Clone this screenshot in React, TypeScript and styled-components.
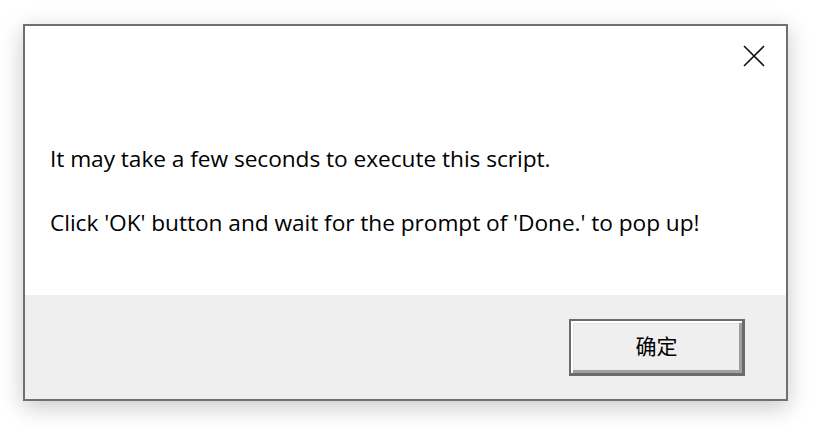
import React from 'react';
import styled, { createGlobalStyle } from 'styled-components';

const GlobalStyle = createGlobalStyle`
  html, body {
    margin: 0;
    padding: 0;
    background: #ffffff;
  }
  body {
    width: 822px;
    height: 439px;
    overflow: hidden;
    font-family: 'Open Sans', 'Noto Sans', 'Noto Sans CJK SC', sans-serif;
  }
`;

const Dialog = styled.div`
  margin: 24px 0 0 23px;
  width: 765px;
  height: 377px;
  box-sizing: border-box;
  border: 2px solid #707070;
  background: #ffffff;
  display: flex;
  flex-direction: column;
  box-shadow: 0 6px 22px rgba(0, 0, 0, 0.22);
`;

const Content = styled.div`
  flex: 1;
  display: flex;
  flex-direction: column;
  padding: 19px 21px 0 25px;
`;

const TitleRow = styled.div`
  display: flex;
  justify-content: flex-end;
  height: 20px;
`;

const CloseButton = styled.button`
  width: 22px;
  height: 22px;
  padding: 0;
  border: none;
  background: transparent;
  display: flex;
  align-items: center;
  justify-content: center;
  cursor: pointer;
`;

const Message = styled.p<{ $gap: number }>`
  margin: ${p => p.$gap}px 0 0;
  font-size: 22.7px;
  letter-spacing: -0.05px;
  line-height: 32px;
  color: #000000;
  white-space: nowrap;
`;

const Footer = styled.div`
  height: 104px;
  background: #efefef;
  display: flex;
  justify-content: flex-end;
  align-items: flex-start;
  padding: 24px 41px 0 0;
  box-sizing: border-box;
`;

const OkButton = styled.button`
  width: 176px;
  height: 57px;
  box-sizing: border-box;
  border: 2px solid #6b6b6b;
  border-right-width: 3px;
  border-bottom-width: 3px;
  background: #efefef;
  box-shadow:
    inset 2px 2px 0 #ffffff,
    inset -3px -3px 0 #a0a0a0,
    inset 3px 3px 0 #e3e3e3;
  font-family: 'Noto Sans CJK SC', 'Noto Sans', sans-serif;
  font-size: 21px;
  color: #000000;
  padding: 0 0 4px;
  display: flex;
  align-items: center;
  justify-content: center;
`;

export default function App() {
  return (
    <>
      <GlobalStyle />
      <Dialog>
        <Content>
          <TitleRow>
            <CloseButton type="button" aria-label="Close">
              <svg width="22" height="22" viewBox="0 0 22 22">
                <path d="M1 1 L21 21 M21 1 L1 21" stroke="#111" strokeWidth="1.6" fill="none" />
              </svg>
            </CloseButton>
          </TitleRow>
          <Message $gap={78}>It may take a few seconds to execute this script.</Message>
          <Message $gap={32}>Click 'OK' button and wait for the prompt of 'Done.' to pop up!</Message>
        </Content>
        <Footer>
          <OkButton type="button">确定</OkButton>
        </Footer>
      </Dialog>
    </>
  );
}
